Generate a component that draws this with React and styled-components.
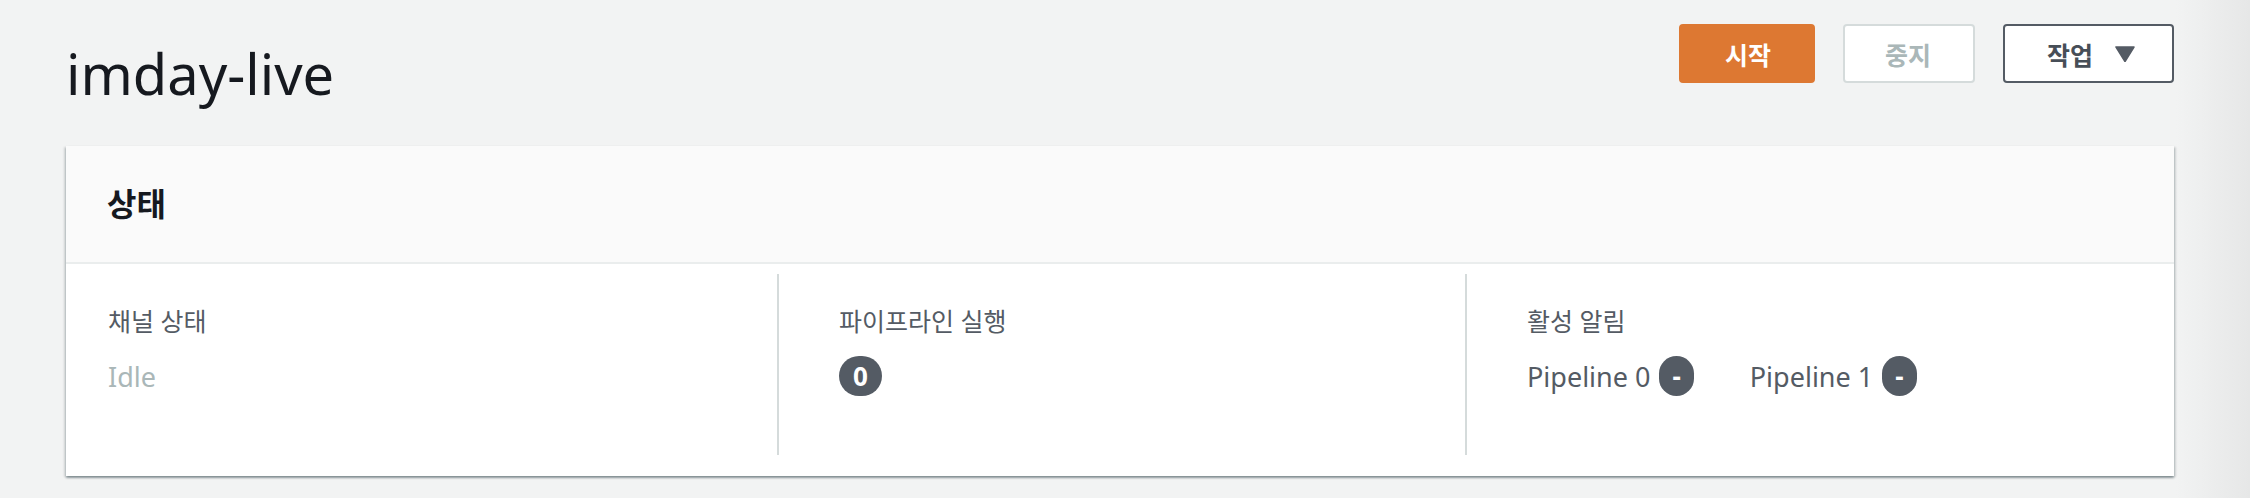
import React from "react";
import styled, { createGlobalStyle } from "styled-components";

const GlobalStyle = createGlobalStyle`
  html, body {
    margin: 0;
    padding: 0;
    background: linear-gradient(to right, #f2f3f3 0, #f2f3f3 calc(100% - 74px), #e6e7e7 100%);
  }
  * { box-sizing: border-box; }
`;

const font = `"Noto Sans", "Noto Sans CJK KR", sans-serif`;

const Page = styled.div`
  min-height: 100vh;
  padding: 24px 76px 0 66px;
  font-family: ${font};
`;

const HeaderRow = styled.div`
  display: flex;
  justify-content: space-between;
  align-items: flex-start;
`;

const Title = styled.h1`
  margin: 19px 0 0 0;
  font-size: 56px;
  line-height: 60px;
  font-weight: 400;
  color: #16191f;
`;

const Actions = styled.div`
  display: flex;
  gap: 28px;
`;

const Button = styled.button`
  display: flex;
  align-items: center;
  justify-content: center;
  gap: 22px;
  height: 59px;
  padding: 0 ${(p) => p.$padR || 42}px 0 ${(p) => p.$padL || 42}px;
  border-radius: 4px;
  font-family: ${font};
  font-size: 25px;
  font-weight: 700;
  cursor: pointer;
  border: 2px solid ${(p) =>
    p.$variant === "primary" ? "#dd7832" : p.$variant === "disabled" ? "#d5dbdb" : "#545b64"};
  background: ${(p) => (p.$variant === "primary" ? "#dd7832" : "#ffffff")};
  color: ${(p) =>
    p.$variant === "primary" ? "#ffffff" : p.$variant === "disabled" ? "#aab7b8" : "#474e57"};
`;

const Caret = () => (
  <svg width="20" height="16" viewBox="0 0 20 16" aria-hidden="true">
    <path d="M1 1 H19 L10 15.5 Z" fill="#545b64" stroke="#545b64" strokeWidth="1.5" strokeLinejoin="round" />
  </svg>
);

const Card = styled.section`
  margin-top: 43px;
  background: #ffffff;
  box-shadow: 0 2px 2px 0 rgba(0, 28, 36, 0.35), 2px 1px 2px 0 rgba(0, 28, 36, 0.12),
    -2px 1px 2px 0 rgba(0, 28, 36, 0.12);
`;

const CardHeader = styled.header`
  display: flex;
  align-items: center;
  height: 118px;
  padding-left: 41px;
  background: #fafafa;
  border-bottom: 2px solid #eaeded;
`;

const CardTitle = styled.h2`
  margin: 0;
  font-size: 32px;
  line-height: 40px;
  font-weight: 700;
  color: #16191f;
`;

const Columns = styled.div`
  display: grid;
  grid-template-columns: 711px 688px 1fr;
  padding: 10px 0 21px;
`;

const Column = styled.div`
  display: flex;
  flex-direction: column;
  height: 181px;
  padding-top: 31px;
  padding-left: ${(p) => (p.$divided ? 60 : 42)}px;
  border-left: ${(p) => (p.$divided ? "2px solid #d5dbdb" : "none")};
`;

const Label = styled.div`
  font-size: 25px;
  line-height: 32px;
  color: #545b64;
`;

const ValueRow = styled.div`
  display: flex;
  align-items: center;
  height: 40px;
  margin-top: 19px;
  font-size: 27px;
  color: ${(p) => (p.$muted ? "#aab7b8" : "#545b64")};
`;

const Pipeline = styled.span`
  display: flex;
  align-items: center;
  gap: 9px;
  margin-right: 56px;
`;

const Badge = styled.span`
  display: inline-flex;
  align-items: center;
  justify-content: center;
  height: 40px;
  padding: 0 ${(p) => (p.$narrow ? 13 : 14)}px;
  border-radius: 20px;
  background: #545b64;
  color: #ffffff;
  font-size: 26px;
  font-weight: 700;
  line-height: 1;
`;

export default function App() {
  return (
    <>
      <GlobalStyle />
      <Page>
        <HeaderRow>
          <Title>imday-live</Title>
          <Actions>
            <Button $variant="primary" $padL={44} $padR={42}>시작</Button>
            <Button $variant="disabled" $padL={40} $padR={42}>중지</Button>
            <Button $padL={42} $padR={37}>
              작업
              <Caret />
            </Button>
          </Actions>
        </HeaderRow>
        <Card>
          <CardHeader>
            <CardTitle>상태</CardTitle>
          </CardHeader>
          <Columns>
            <Column>
              <Label>채널 상태</Label>
              <ValueRow $muted>Idle</ValueRow>
            </Column>
            <Column $divided>
              <Label>파이프라인 실행</Label>
              <ValueRow>
                <Badge>0</Badge>
              </ValueRow>
            </Column>
            <Column $divided>
              <Label>활성 알림</Label>
              <ValueRow>
                <Pipeline>
                  Pipeline 0 <Badge $narrow>-</Badge>
                </Pipeline>
                <Pipeline>
                  Pipeline 1 <Badge $narrow>-</Badge>
                </Pipeline>
              </ValueRow>
            </Column>
          </Columns>
        </Card>
      </Page>
    </>
  );
}
